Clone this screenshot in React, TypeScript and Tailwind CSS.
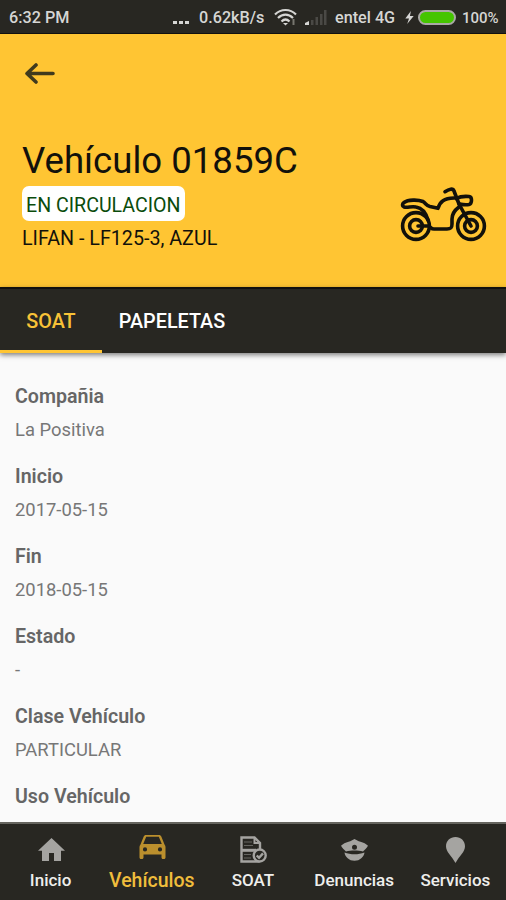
import type { ReactNode } from "react";

type Detail = { label: string; value?: string };

type NavItem = { label: string; icon: ReactNode; active?: boolean };

const details: Detail[] = [
  { label: "Compañia", value: "La Positiva" },
  { label: "Inicio", value: "2017-05-15" },
  { label: "Fin", value: "2018-05-15" },
  { label: "Estado", value: "-" },
  { label: "Clase Vehículo", value: "PARTICULAR" },
  { label: "Uso Vehículo" },
];

const navItems: NavItem[] = [
  { label: "Inicio", icon: <HomeIcon /> },
  { label: "Vehículos", icon: <CarIcon />, active: true },
  { label: "SOAT", icon: <PolicyIcon /> },
  { label: "Denuncias", icon: <PoliceIcon /> },
  { label: "Servicios", icon: <PinIcon /> },
];

function HomeIcon() {
  return (
    <svg width="27" height="23" viewBox="0 0 27 23" fill="currentColor">
      <path d="M13.5 0 0 12.8h4V23h7v-8h5v8h7V12.8h4Z" />
    </svg>
  );
}

function CarIcon() {
  return (
    <svg width="27" height="24" viewBox="0 0 27 24" fill="currentColor">
      <path
        fillRule="evenodd"
        d="M7 0h13c1.200 0 1.900.6 2.300 1.600L25.500 9.500c.7.700 1 1.500 1 2.500v10.500c0 .9-.6 1.500-1.500 1.500h-1c-.9 0-1.500-.6-1.500-1.500V19.500h-18v3c0 .9-.6 1.500-1.500 1.500H2c-.9 0-1.500-.6-1.500-1.500V12c0-1 .3-1.800 1-2.500l3.200-7.900C5.100.6 5.800 0 7 0Zm.2 1.700L4.200 9h18.600l-3-7.300ZM6 12.300a2.100 2.100 0 1 0 0 4.200 2.100 2.100 0 0 0 0-4.200Zm15 0a2.100 2.100 0 1 0 0 4.200 2.100 2.100 0 0 0 0-4.200Z"
      />
    </svg>
  );
}

function PolicyIcon() {
  return (
    <svg
      width="27"
      height="27"
      viewBox="0 0 27 27"
      fill="none"
      stroke="currentColor"
      strokeWidth="2.400"
    >
      <path d="M19.500 25.500H1.500V1.500h13L20 7v6" />
      <path d="M14.500 1.500V7H20" strokeWidth="2" />
      <path d="M4 6h8M4 9.500h9M4 18.500h7M4 22h7" strokeWidth="0.500" />
      <path d="M2 14.300h14" strokeWidth="3" />
      <circle cx="19.700" cy="19.500" r="6" fill="#282722" />
      <path d="m16.700 19.500 2.300 2.200 4-4.300" />
    </svg>
  );
}

function PoliceIcon() {
  return (
    <svg width="27" height="22" viewBox="0 0 27 22" fill="currentColor">
      <path
        fillRule="evenodd"
        d="M13.500 0c2 1.200 3.500 2 6 2.800 3 .9 5.500 2 7.500 4-1.400 2.700-3.400 4.300-5 5.700-5-1.400-12-1.400-17 0-1.600-1.400-3.600-3-5-5.700 2-2 4.500-3.100 7.500-4 2.500-.8 4-1.600 6-2.800Zm0 5.800a2.500 2.500 0 1 0 0 5 2.500 2.500 0 0 0 0-5Z"
      />
      <path d="M3.500 13.500c6 2.400 14 2.400 20 0-.6 4.500-4.600 8.300-10 8.300s-9.400-3.800-10-8.300Z" />
    </svg>
  );
}

function PinIcon() {
  return (
    <svg width="19" height="26" viewBox="0 0 19 26" fill="currentColor">
      <path d="M9.500 0C4.200 0 0 3.900 0 9.200 0 15 5.500 18.500 9.500 26 13.500 18.500 19 15 19 9.200 19 3.900 14.800 0 9.500 0Z" />
    </svg>
  );
}

function MotorcycleIcon() {
  return (
    <svg
      width="88"
      height="57"
      viewBox="0 0 88 57"
      fill="none"
      stroke="currentColor"
      strokeWidth="3.600"
      strokeLinecap="round"
      strokeLinejoin="round"
    >
      <circle cx="16" cy="40" r="13.400" />
      <circle cx="16" cy="40" r="6.400" />
      <circle cx="71" cy="40" r="13.400" />
      <circle cx="71" cy="40" r="6.400" />
      <path d="M18 40h10c2 0 3 3 6 3h13c4 0 5-1 5-5v-5c0-6 3-9 7-12" />
      <path d="M28 34c-2-7-6-12-12-13-5-1-8 1-12 0-2-1-2-3 0-4.500 4-3 14-3 19-1 3 2 3 4 7 5l8 1.800c2-7 6-10 16-10.300" />
      <path d="M45 5.700c4-2.800 8-3.700 9-.7L59 18l12 22" />
      <path d="M56 12.500c4-2 8-2.500 13-2 2 .3 2.500 1.500 2.500 3.500s-.5 4-2.500 4.500c-4 .6-7 0-10-.5" />
    </svg>
  );
}

function StatusBar() {
  return (
    <div className="flex h-[34px] shrink-0 items-center border-b border-[#12110f] bg-[#282722] pt-[3px] text-base font-medium text-[#d6d6d4]">
      <span className="ml-[9px] w-[163px] text-[16.200px] whitespace-nowrap">6:32 PM</span>
      <span className="flex w-[27px] gap-0.5 pt-2 pl-px">
        <i className="h-[3px] w-1 bg-current" />
        <i className="h-[3px] w-1 bg-current" />
        <i className="h-[3px] w-1 bg-current" />
      </span>
      <span className="w-[75px] text-[16.200px] whitespace-nowrap">0.62kB/s</span>
      <svg
        className="mb-0.5"
        width="23"
        height="18"
        viewBox="0 0 23 18"
        fill="none"
        stroke="currentColor"
        strokeWidth="2.200"
      >
        <path d="M1 6.500c6-6 15-6 21 0M4 10c4.500-4.500 10.500-4.500 15 0M7.500 13.500c2.500-2.500 5.500-2.500 8 0" />
        <path d="m9 15 2.500 2.500L14 15Z" fill="currentColor" stroke="none" />
        <path d="M19.500 11v6" stroke="#77766f" strokeWidth="2" />
      </svg>
      <svg className="mb-0.5 ml-2" width="22" height="15" viewBox="0 0 22 15">
        <path d="M0 15v-2l4-2v4Z" fill="#d6d6d4" />
        <path d="M6 15v-5h2.500v5ZM10.500 15V7H13v8ZM15 15V4h2.500v11ZM19 15V0h2.500v15Z" fill="#4a4945" />
      </svg>
      <span className="ml-2 w-[70px] text-[16.200px] whitespace-nowrap">entel 4G</span>
      <svg className="mb-0.5" width="9" height="13" viewBox="0 0 9 14" fill="currentColor">
        <path d="M6 0 0 8h4l-2 6 7-8.500H5Z" />
      </svg>
      <span className="mb-0.5 ml-1 h-[15px] w-[38px] rounded-full border-2 border-[#aaa9a6] bg-[#45c500]" />
      <span className="ml-[6px] text-[15px] whitespace-nowrap">100%</span>
    </div>
  );
}

function Header() {
  return (
    <header className="flex h-[253px] shrink-0 flex-col bg-[#ffc533] pl-[22px] text-[#12110b]">
      <svg
        className="mt-[29px] ml-[3px] shrink-0"
        width="30"
        height="21"
        viewBox="0 0 30 21"
        fill="none"
        stroke="#403a1d"
        strokeWidth="3.600"
        strokeLinecap="round"
        strokeLinejoin="round"
      >
        <path d="M11 2 2 10.500l9 8.500M2.500 10.500H28" />
      </svg>
      <div className="mt-[52px] flex items-start justify-between">
        <div>
          <h1 className="h-[50px] text-[36.600px] leading-[50px] whitespace-nowrap">
            Vehículo 01859C
          </h1>
          <div className="flex h-[35px] w-[163px] items-center rounded-[7px] bg-white pt-1 pl-1 text-[19.600px] whitespace-nowrap text-[#0b4c0b]">
            EN CIRCULACION
          </div>
          <p className="mt-1 text-[19.700px] leading-7 whitespace-nowrap">
            LIFAN - LF125-3, AZUL
          </p>
        </div>
        <div className="mt-[50px] mr-[18px]">
          <MotorcycleIcon />
        </div>
      </div>
    </header>
  );
}

function Tabs() {
  return (
    <div className="relative flex h-[66px] shrink-0 border-t-2 border-[#12110f] bg-[#282722] text-[19.800px] font-medium shadow-[0_2px_5px_rgba(0,0,0,0.5)]">
      <button className="w-[102px] border-b-[3px] border-[#ffc533] pt-1 text-[#f8c237]">
        SOAT
      </button>
      <button className="w-[140px] pt-px text-white">PAPELETAS</button>
    </div>
  );
}

function BottomNav() {
  return (
    <nav className="grid h-[78px] shrink-0 grid-cols-5 border-t-2 border-[#65645e] bg-[#282722]">
      {navItems.map((item) => (
        <button
          key={item.label}
          className={`flex flex-col items-center font-medium whitespace-nowrap ${
            item.active ? "text-[#f0bd3c]" : "text-[#eeeeec]"
          }`}
        >
          <span
            className={`flex h-[43px] items-center justify-center ${
              item.active ? "pt-2 pb-1.5 pl-0.5 text-[#bb8f2d]" : "pt-2 pl-px text-[#a5a4a1]"
            }`}
          >
            {item.icon}
          </span>
          <span
            className={
              item.active ? "text-[19.500px] leading-[27px]" : "text-[17px] leading-[26px]"
            }
          >
            {item.label}
          </span>
        </button>
      ))}
    </nav>
  );
}

export default function App() {
  return (
    <div className="flex h-screen w-full flex-col overflow-hidden bg-[#fafafa] font-[Roboto,sans-serif]">
      <StatusBar />
      <Header />
      <Tabs />
      <main className="min-h-0 flex-1 overflow-hidden px-[15px] pt-7">
        {details.map((detail) => (
          <div key={detail.label} className="h-[80.100px]">
            <h2 className="text-[19.600px] leading-8 font-semibold text-[#666]">{detail.label}</h2>
            <p className="text-[18.400px] leading-[33px] text-[#777]">{detail.value}</p>
          </div>
        ))}
      </main>
      <BottomNav />
    </div>
  );
}
